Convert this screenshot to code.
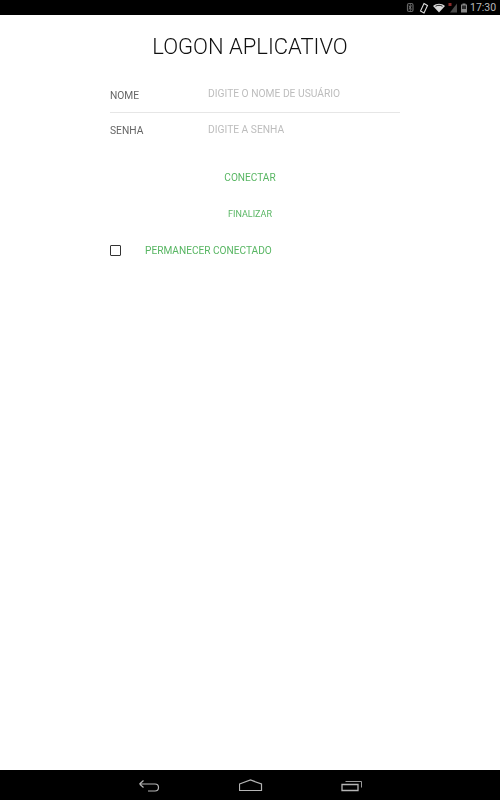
<div class="screen">
  <header class="status">
    <svg class="st-icons" width="70" height="15" viewBox="0 0 70 15" fill="none" aria-hidden="true">
      <path d="M9 3.500h2.500a1.500 1.500 0 0 1 1.500 1.500v5a1.500 1.500 0 0 1-1.500 1.500H9A1.500 1.500 0 0 1 7.500 10V5A1.500 1.500 0 0 1 9 3.500Z" stroke="#666" stroke-width="1.200"/>
      <path d="M8.800 5.700 11.500 9.300 10.200 10.500V4.500L11.500 5.700 8.800 9.300" stroke="#8a8a8a" stroke-width=".7"/>
      <path d="m24 3.500 3.500 2-3.500 7.500-3.500-2z" stroke="#ddd" stroke-width="1.100"/>
      <path d="M33 6c3.500-3 8.500-3 12 0l-6 6.500z" fill="#d8d8d8"/>
      <path d="M35.500 6.300c2-1.300 5-1.300 7 0" stroke="#222" stroke-width="1"/>
      <path d="M50 12.500l7-9v9z" fill="#4a4a4a"/>
      <path d="M48.500 3h3v3h-3z" fill="#8a2a2a"/>
      <path d="M62.500 3.500h3v1h1.500v8h-6v-8h1.500z" fill="#888"/>
      <path d="M62 5.500h4v3.500h-4z" fill="#2a2a2a"/>
    </svg>
    <span class="clock">17:30</span>
  </header>

  <main class="content">
    <h1>LOGON APLICATIVO</h1>
    <form class="form">
      <div class="row divided">
        <span class="label">NOME</span>
        <span class="hint">DIGITE O NOME DE USUÁRIO</span>
      </div>
      <div class="row second">
        <span class="label">SENHA</span>
        <span class="hint">DIGITE A SENHA</span>
      </div>
      <div class="action primary">CONECTAR</div>
      <div class="action secondary">FINALIZAR</div>
      <div class="check">
        <span class="box"></span>
        <span class="check-label">PERMANECER CONECTADO</span>
      </div>
    </form>
  </main>

  <footer class="nav">
    <svg width="22" height="14" viewBox="0 0 22 14" fill="none" aria-hidden="true">
      <path d="M1.500 6H17a3.500 3.500 0 0 1 0 7H10M1.500 6l4-3.500M1.500 6l4 3.500" stroke="#b5b5b5" stroke-width="1.200"/>
    </svg>
    <svg width="24" height="14" viewBox="0 0 24 14" fill="none" aria-hidden="true">
      <path d="M.5 6 11.500 2l11 4v6.500H.5z" stroke="#b5b5b5" stroke-width="1.200"/>
    </svg>
    <svg width="22" height="14" viewBox="0 0 22 14" fill="none" aria-hidden="true">
      <path d="M1 6.500h16v6H1z" stroke="#b5b5b5" stroke-width="1.300"/>
      <path d="M4.500 3.500h16v6" stroke="#9a9a9a" stroke-width="1"/>
    </svg>
  </footer>
</div>

<style>
  :global(body) {
    margin: 0;
    background: #fff;
  }
  .screen {
    width: 500px;
    height: 800px;
    display: flex;
    flex-direction: column;
    font-family: Roboto, "Liberation Sans", sans-serif;
    overflow: hidden;
  }
  .status {
    height: 15px;
    background: #000;
    display: flex;
    justify-content: flex-end;
    align-items: center;
    flex: none;
  }
  .st-icons {
    display: block;
  }
  .clock {
    width: 30px;
    color: #b8b8b8;
    font-size: 10.500px;
    line-height: 15px;
  }
  .content {
    flex: 1;
    padding: 0 100px 0 110px;
    will-change: transform;
  }
  h1 {
    margin: 19px 0 0;
    padding-right: 10px;
    text-align: center;
    color: #111;
    font-size: 22px;
    font-weight: 300;
    line-height: 26px;
  }
  .form {
    margin-top: 23px;
  }
  .row {
    display: flex;
    box-sizing: border-box;
    font-size: 10.250px;
  }
  .divided {
    height: 30px;
    padding-top: 5px;
    border-bottom: 1px solid #e6e6e6;
  }
  .second {
    height: 53px;
    padding-top: 10px;
  }
  .label {
    width: 98px;
    color: #666;
    line-height: 14px;
    margin-top: 1px;
  }
  .hint {
    color: #bdbdbd;
    line-height: 14px;
  }
  .divided .hint {
    margin-top: -1px;
  }
  .action {
    color: #58b663;
    text-align: center;
    padding-right: 10px;
  }
  .primary {
    margin-top: 5px;
    font-size: 10.100px;
    line-height: 14px;
  }
  .secondary {
    margin-top: 22px;
    font-size: 9px;
    line-height: 14px;
  }
  .check {
    display: flex;
    align-items: center;
    margin-top: 23px;
  }
  .box {
    width: 9px;
    height: 9px;
    border: 1px solid #333;
    border-radius: 1px;
    margin-right: 24px;
    margin-bottom: 2px;
  }
  .check-label {
    color: #58b663;
    font-size: 10.150px;
    line-height: 14px;
  }
  .nav {
    height: 30px;
    background: #000;
    flex: none;
    display: flex;
    align-items: center;
    justify-content: space-between;
    box-sizing: border-box;
    padding: 0 137px 0 138px;
  }
</style>
